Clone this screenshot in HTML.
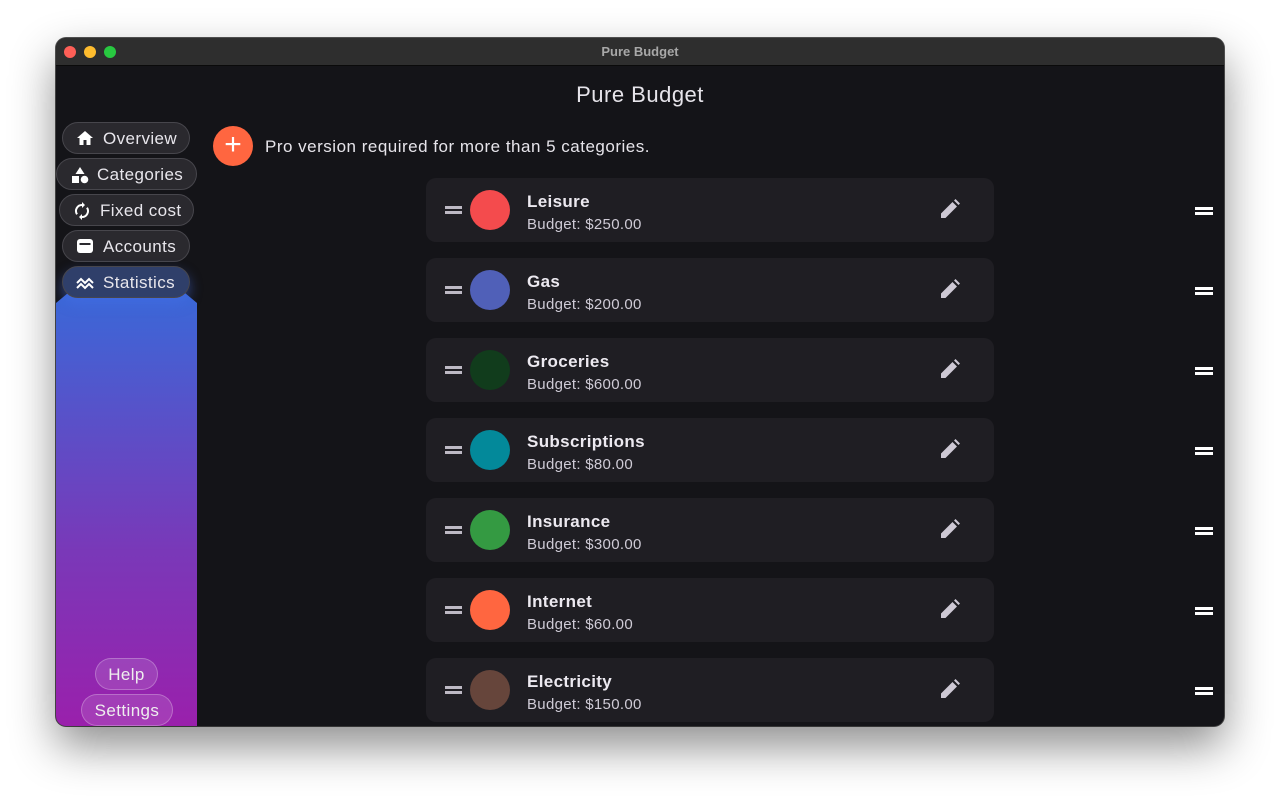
<!DOCTYPE html>
<html><head><meta charset="utf-8"><style>
*{box-sizing:border-box;margin:0;padding:0}
body{width:1280px;height:800px;background:#fff;font-family:"Liberation Sans",sans-serif;position:relative;overflow:hidden}
.win{position:absolute;left:56px;top:38px;width:1168px;height:688px;border-radius:10px;background:#141418;overflow:hidden;box-shadow:0 20px 45px rgba(0,0,0,.45),0 0 0 1px #555}
.tb{position:absolute;left:0;top:0;width:100%;height:28px;background:#2e2e2e;border-bottom:1px solid #0a0a0a;text-align:center;color:#a8a8a8;font-size:13px;font-weight:bold;line-height:28px}
.dot{position:absolute;top:8px;width:12px;height:12px;border-radius:50%}
.title{position:absolute;left:0;width:1168px;top:44px;text-align:center;color:#e6e4ea;font-size:22px;letter-spacing:.5px}
.grad{position:absolute;left:0;top:255px;width:141px;height:433px;background:linear-gradient(#3a68d8,#7a38b8 60%,#9a20ac);clip-path:polygon(0 10px,12px 0,129px 0,141px 10px,141px 100%,0 100%)}
.nav{position:absolute;height:32px;border-radius:16px;background:#2a292e;border:1px solid #47464c;color:#e8e6ec;font-size:17px;line-height:31px;padding-left:40px;letter-spacing:.4px}
.nav svg{position:absolute;left:13px;top:7px}
.bot{position:absolute;height:32px;border-radius:16px;background:rgba(255,255,255,.12);border:1px solid rgba(255,255,255,.25);color:#eee;font-size:17px;line-height:31px;text-align:center;letter-spacing:.4px}
.add{position:absolute;left:157px;top:88px;width:40px;height:40px;border-radius:50%;background:#ff6640;color:#fff;font-size:30px;line-height:38px;text-align:center}
.pro{position:absolute;left:209px;top:99px;color:#e6e4ea;font-size:17px;letter-spacing:.5px}
.card{position:absolute;left:370px;width:568px;height:64px;border-radius:10px;background:#1f1e23}
.card .h{position:absolute;left:19px;top:28px;width:17px;height:3px;background:#bdb9c4;box-shadow:0 5px 0 #bdb9c4}
.card .c{position:absolute;left:44px;top:12px;width:40px;height:40px;border-radius:50%}
.card .n{position:absolute;left:101px;top:14px;color:#ece9f0;font-size:17px;font-weight:bold;letter-spacing:.35px}
.card .b{position:absolute;left:101px;top:38px;color:#cfcbd6;font-size:15px;letter-spacing:.3px}
.card svg{position:absolute;left:514px;top:21px}
.rh{position:absolute;left:1139px;width:18px;height:3px;background:#fff;box-shadow:0 5px 0 #fff}
</style></head><body>
<div class="win">
<div class="tb">Pure Budget
<div class="dot" style="left:8px;background:#fe5f57"></div><div class="dot" style="left:28px;background:#febc2e"></div><div class="dot" style="left:48px;background:#28c840"></div></div>
<div class="title">Pure Budget</div>
<div class="grad"></div>
<div class="nav" style="left:6px;top:84px;width:128px"><svg width="18" height="16" viewBox="0 0 18 16"><path d="M9 1L1 8h2.5v7h4v-5h3v5h4V8H17z" fill="#fff"/></svg>Overview</div>
<div class="nav" style="left:0;top:120px;width:141px;padding-left:40px"><svg width="18" height="18" viewBox="0 0 18 18" style="left:14px"><path d="M9 1L13.5 8h-9z" fill="#fff"/><rect x="1" y="10" width="7" height="7" fill="#fff"/><circle cx="13.5" cy="13.5" r="3.8" fill="#fff"/></svg>Categories</div>
<div class="nav" style="left:3px;top:156px;width:135px"><svg width="16" height="18" viewBox="0 0 16 18" style="left:14px"><path d="M8 3a6 6 0 0 0-5 9.3M8 15a6 6 0 0 0 5-9.3" stroke="#fff" stroke-width="2" fill="none"/><path d="M8 0v6l3-3zM8 18v-6l-3 3z" fill="#fff"/></svg>Fixed cost</div>
<div class="nav" style="left:6px;top:192px;width:128px"><svg width="18" height="16" viewBox="0 0 18 16"><rect x="1" y="1" width="16" height="14" rx="3" fill="#fff"/><rect x="3.5" y="5" width="11" height="2" fill="#2a292e"/></svg>Accounts</div>
<div class="nav" style="left:6px;top:228px;width:128px;background:#2f3f6a;box-shadow:0 6px 12px rgba(70,110,230,.5)"><svg width="18" height="16" viewBox="0 0 18 16"><path d="M1 9l4-4 4 4 4-4 4 4M1 14l4-4 4 4 4-4 4 4" stroke="#fff" stroke-width="2" fill="none"/></svg>Statistics</div>
<div class="bot" style="left:39px;top:620px;width:63px">Help</div>
<div class="bot" style="left:25px;top:656px;width:92px">Settings</div>
<div class="add">+</div>
<div class="pro">Pro version required for more than 5 categories.</div>

<div class="card" style="top:140px"><div class="h"></div><div class="c" style="background:#f44b4d"></div><div class="n">Leisure</div><div class="b">Budget: $250.00</div><svg width="20" height="20" viewBox="0 0 20 20"><path d="M1 19v-4.5L12.5 3 17 7.5 5.5 19z M14 1.5l1.5-1.5 4.5 4.5-1.5 1.5z" fill="#cdc8d4"/></svg></div>
<div class="rh" style="top:169px"></div>
<div class="card" style="top:220px"><div class="h"></div><div class="c" style="background:#5060b8"></div><div class="n">Gas</div><div class="b">Budget: $200.00</div><svg width="20" height="20" viewBox="0 0 20 20"><path d="M1 19v-4.5L12.5 3 17 7.5 5.5 19z M14 1.5l1.5-1.5 4.5 4.5-1.5 1.5z" fill="#cdc8d4"/></svg></div>
<div class="rh" style="top:249px"></div>
<div class="card" style="top:300px"><div class="h"></div><div class="c" style="background:#113c1c"></div><div class="n">Groceries</div><div class="b">Budget: $600.00</div><svg width="20" height="20" viewBox="0 0 20 20"><path d="M1 19v-4.5L12.5 3 17 7.5 5.5 19z M14 1.5l1.5-1.5 4.5 4.5-1.5 1.5z" fill="#cdc8d4"/></svg></div>
<div class="rh" style="top:329px"></div>
<div class="card" style="top:380px"><div class="h"></div><div class="c" style="background:#03899a"></div><div class="n">Subscriptions</div><div class="b">Budget: $80.00</div><svg width="20" height="20" viewBox="0 0 20 20"><path d="M1 19v-4.5L12.5 3 17 7.5 5.5 19z M14 1.5l1.5-1.5 4.5 4.5-1.5 1.5z" fill="#cdc8d4"/></svg></div>
<div class="rh" style="top:409px"></div>
<div class="card" style="top:460px"><div class="h"></div><div class="c" style="background:#349a42"></div><div class="n">Insurance</div><div class="b">Budget: $300.00</div><svg width="20" height="20" viewBox="0 0 20 20"><path d="M1 19v-4.5L12.5 3 17 7.5 5.5 19z M14 1.5l1.5-1.5 4.5 4.5-1.5 1.5z" fill="#cdc8d4"/></svg></div>
<div class="rh" style="top:489px"></div>
<div class="card" style="top:540px"><div class="h"></div><div class="c" style="background:#ff6640"></div><div class="n">Internet</div><div class="b">Budget: $60.00</div><svg width="20" height="20" viewBox="0 0 20 20"><path d="M1 19v-4.5L12.5 3 17 7.5 5.5 19z M14 1.5l1.5-1.5 4.5 4.5-1.5 1.5z" fill="#cdc8d4"/></svg></div>
<div class="rh" style="top:569px"></div>
<div class="card" style="top:620px"><div class="h"></div><div class="c" style="background:#66453b"></div><div class="n">Electricity</div><div class="b">Budget: $150.00</div><svg width="20" height="20" viewBox="0 0 20 20"><path d="M1 19v-4.5L12.5 3 17 7.5 5.5 19z M14 1.5l1.5-1.5 4.5 4.5-1.5 1.5z" fill="#cdc8d4"/></svg></div>
<div class="rh" style="top:649px"></div>
</div>
</body></html>
